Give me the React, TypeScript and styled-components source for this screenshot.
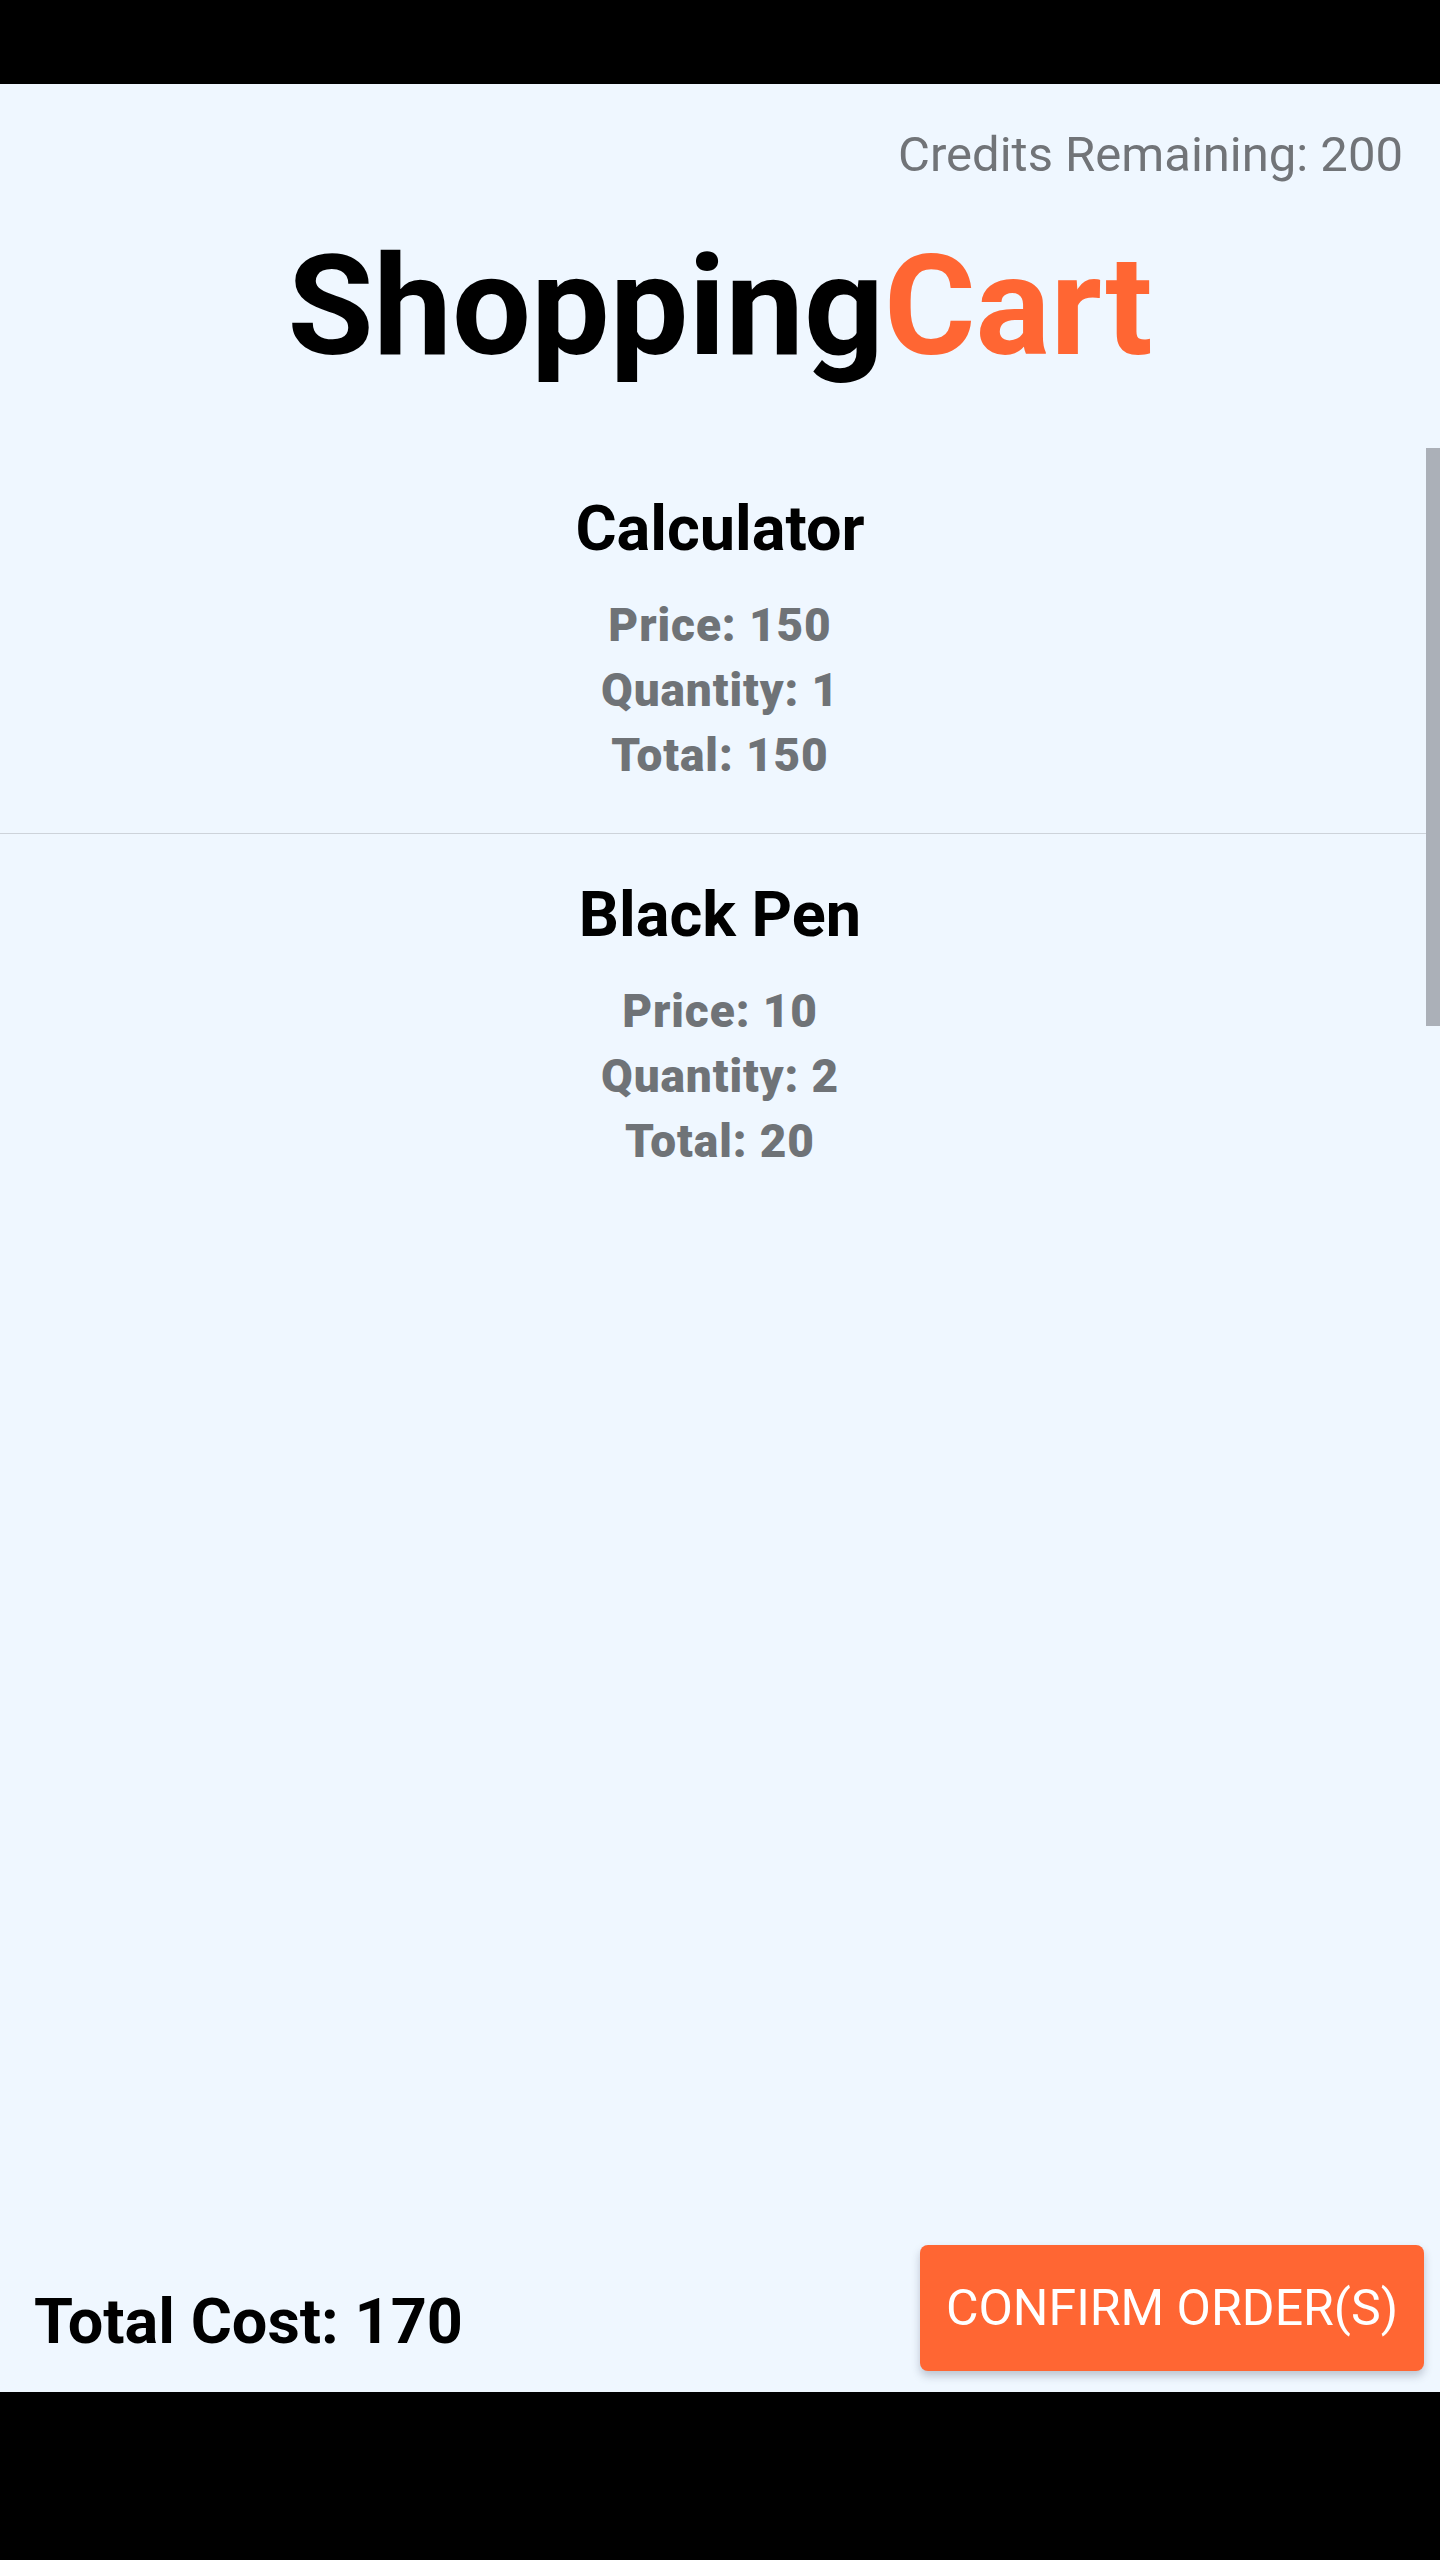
import React from "react";
import styled, { createGlobalStyle } from "styled-components";

const GlobalStyle = createGlobalStyle`
  html, body {
    margin: 0;
    padding: 0;
    background: #000;
  }
  body {
    font-family: Roboto, "Noto Sans", "Liberation Sans", sans-serif;
  }
  * { box-sizing: border-box; }
`;

const Device = styled.div`
  width: 1440px;
  height: 2560px;
  display: flex;
  flex-direction: column;
  background: #000;
`;

const StatusBar = styled.div`
  height: 84px;
  flex: none;
  background: #000;
`;

const NavBar = styled.div`
  height: 168px;
  flex: none;
  background: #000;
`;

const Screen = styled.main`
  flex: 1;
  display: flex;
  flex-direction: column;
  background: #eff7ff;
  padding-top: 42px;
  min-height: 0;
`;

const Credits = styled.div`
  align-self: flex-end;
  margin-right: 37px;
  font-size: 49px;
  line-height: 58px;
  font-weight: 400;
  color: #717478;
`;

const Title = styled.h1`
  margin: 38px 0 0;
  text-align: center;
  font-size: 140px;
  line-height: 168px;
  font-weight: 700;
  color: #000;
`;

const Accent = styled.span`
  color: #ff6633;
`;

const ListArea = styled.section`
  position: relative;
  flex: 1;
  margin-top: 58px;
`;

const ScrollThumb = styled.div`
  position: absolute;
  top: 0;
  right: 0;
  width: 14px;
  height: 578px;
  background: #abb0b8;
`;

const Item = styled.article<{ $divider?: boolean }>`
  display: flex;
  flex-direction: column;
  align-items: center;
  padding: 43px 0 45px;
  border-bottom: ${(p) => (p.$divider ? "1px solid #cdd3da" : "none")};
`;

const ItemName = styled.h2`
  margin: 0 0 27px;
  font-size: 63px;
  line-height: 75px;
  font-weight: 700;
  color: #000;
`;

const Detail = styled.div`
  font-size: 46px;
  line-height: 65px;
  font-weight: 900;
  letter-spacing: 0.9px;
  color: #6f7377;
`;

const Footer = styled.footer`
  display: flex;
  justify-content: space-between;
  align-items: flex-end;
  padding: 0 16px 21px 34px;
`;

const TotalCost = styled.div`
  margin-bottom: 12px;
  font-size: 63px;
  line-height: 75px;
  font-weight: 700;
  color: #000;
`;

const ConfirmButton = styled.button`
  width: 504px;
  height: 126px;
  border: none;
  border-radius: 8px;
  background: #ff6633;
  color: #fff;
  font-family: Roboto, "Noto Sans", "Liberation Sans", sans-serif;
  font-size: 50px;
  font-weight: 400;
  letter-spacing: 0;
  box-shadow: 0 5px 9px rgba(60, 70, 90, 0.28);
  cursor: pointer;
`;

type CartItem = { name: string; price: number; quantity: number };

const items: CartItem[] = [
  { name: "Calculator", price: 150, quantity: 1 },
  { name: "Black Pen", price: 10, quantity: 2 },
];

export default function App() {
  const total = items.reduce((s, i) => s + i.price * i.quantity, 0);
  return (
    <>
      <GlobalStyle />
      <Device>
        <StatusBar />
        <Screen>
          <Credits>Credits Remaining: 200</Credits>
          <Title>
            Shopping<Accent>Cart</Accent>
          </Title>
          <ListArea>
            {items.map((item, idx) => (
              <Item key={item.name} $divider={idx < items.length - 1}>
                <ItemName>{item.name}</ItemName>
                <Detail>Price: {item.price}</Detail>
                <Detail>Quantity: {item.quantity}</Detail>
                <Detail>Total: {item.price * item.quantity}</Detail>
              </Item>
            ))}
            <ScrollThumb />
          </ListArea>
          <Footer>
            <TotalCost>Total Cost: {total}</TotalCost>
            <ConfirmButton>CONFIRM ORDER(S)</ConfirmButton>
          </Footer>
        </Screen>
        <NavBar />
      </Device>
    </>
  );
}
